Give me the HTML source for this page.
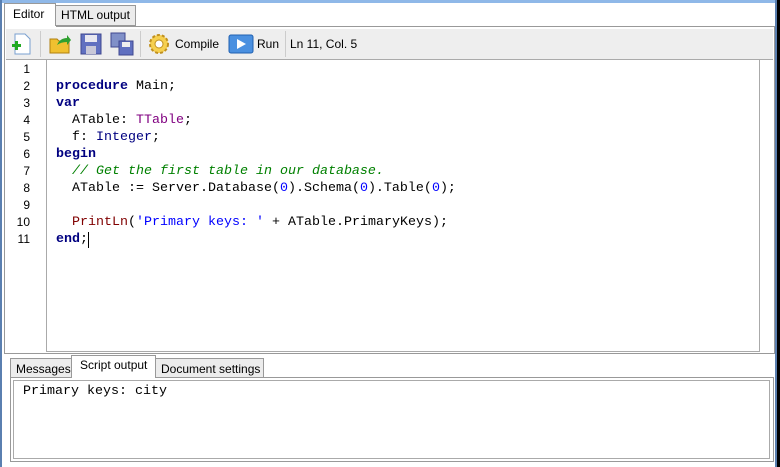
<!DOCTYPE html><html><head><style>
body{margin:0;width:780px;height:467px;overflow:hidden;background:#fff;font-family:"Liberation Sans",sans-serif;font-size:12px;position:relative}
.a{position:absolute;box-sizing:border-box}
.code{font-family:"Liberation Mono",monospace;font-size:13.33px;line-height:17px;white-space:pre}
.k{color:#000080;font-weight:bold}.t{color:#800080}.ty{color:#000080}.c{color:#008000;font-style:italic}.s{color:#0000ff}.n{color:#0000ff}.f{color:#800000}
.tb{font-size:12px;color:#000}
</style></head><body>
<div class="a" style="left:0;top:0;width:780px;height:3px;background:#8fb8e8"></div>
<div class="a" style="left:0;top:0;width:2px;height:467px;background:#5a7fb0"></div>
<div class="a" style="left:775px;top:0;width:2px;height:467px;background:#5a7fb0"></div>
<div class="a" style="left:777px;top:0;width:3px;height:467px;background:#000"></div>
<!-- top tabs -->
<div class="a" style="left:55px;top:5px;width:81px;height:21px;background:#ececec;border:1px solid #999;padding:2px 0 0 5px;font-size:12px">HTML output</div>
<div class="a" style="left:4px;top:3px;width:52px;height:24px;background:#fff;border:1px solid #999;border-bottom:none;padding:3px 0 0 8px;font-size:12px">Editor</div>
<div class="a" style="left:4px;top:26px;width:771px;height:1px;background:#999"></div>
<div class="a" style="left:4px;top:26px;width:52px;height:1px;background:#fff"></div>
<!-- main frame -->
<div class="a" style="left:4px;top:26px;width:771px;height:328px;border:1px solid #999;border-top:none"></div>
<div class="a" style="left:6px;top:29px;width:767px;height:31px;background:#eeeeee;border-bottom:1px solid #aaa"></div>
<div class="a" style="left:40px;top:31px;width:1px;height:26px;background:#ccc"></div>
<div class="a" style="left:140px;top:31px;width:1px;height:26px;background:#ccc"></div>
<div class="a" style="left:285px;top:31px;width:1px;height:26px;background:#ccc"></div>
<!-- icons -->
<svg class="a" style="left:10px;top:32px" width="24" height="24"><path d="M5 2h10l5 5v15H5z" fill="#fff" stroke="#7aa0d0"/><rect x="2" y="12" width="9" height="3" fill="#2a2"/><rect x="5" y="9" width="3" height="9" fill="#2a2"/></svg>
<svg class="a" style="left:48px;top:32px" width="24" height="24"><path d="M2 7h7l2 2h10v12H2z" fill="#f0c030" stroke="#b08010"/><path d="M9 13q3-7 10-7v-3l4 5-4 5v-3q-6 0-10 3z" fill="#30a030"/></svg>
<svg class="a" style="left:80px;top:33px" width="22" height="22"><rect x="1" y="1" width="20" height="20" fill="#6070c0" stroke="#404890"/><rect x="5" y="2" width="12" height="7" fill="#e8e8f0"/><rect x="6" y="13" width="10" height="8" fill="#c8c8d8"/></svg>
<svg class="a" style="left:110px;top:32px" width="24" height="24"><rect x="1" y="1" width="14" height="14" fill="#8090c8" stroke="#404890"/><rect x="9" y="9" width="14" height="14" fill="#6070c0" stroke="#404890"/><rect x="12" y="10" width="8" height="5" fill="#eee"/></svg>
<svg class="a" style="left:147px;top:32px" width="24" height="24"><circle cx="12" cy="12" r="9" fill="#f6d050" stroke="#c09020" stroke-width="2" stroke-dasharray="3 2"/><circle cx="12" cy="12" r="4" fill="#fff" stroke="#c09020"/></svg>
<div class="a tb" style="left:175px;top:37px">Compile</div>
<svg class="a" style="left:228px;top:34px" width="26" height="20"><rect x="1" y="1" width="24" height="18" rx="2" fill="#4a90e0" stroke="#2060b0"/><path d="M9 5l9 5-9 5z" fill="#fff"/></svg>
<div class="a tb" style="left:257px;top:37px">Run</div>
<div class="a tb" style="left:290px;top:37px">Ln 11, Col. 5</div>
<!-- editor -->
<div class="a" style="left:6px;top:60px;width:40px;height:292px;background:#fff"></div>
<div class="a" style="left:46px;top:60px;width:714px;height:292px;border:1px solid #aaa;border-top:none"></div>
<div class="a code" style="left:6px;top:61px;width:24px;text-align:right;font-family:'Liberation Sans',sans-serif;font-size:12px">1
2
3
4
5
6
7
8
9
10
11</div>
<div class="a code" style="left:56px;top:61px">
<span class="k">procedure</span> Main;
<span class="k">var</span>
  ATable: <span class="t">TTable</span>;
  f: <span class="ty">Integer</span>;
<span class="k">begin</span>
  <span class="c">// Get the first table in our database.</span>
  ATable := Server.Database(<span class="n">0</span>).Schema(<span class="n">0</span>).Table(<span class="n">0</span>);

  <span class="f">PrintLn</span>(<span class="s">'Primary keys: '</span> + ATable.PrimaryKeys);
<span class="k">end</span>;</div>
<div class="a" style="left:88px;top:232px;width:1px;height:16px;background:#000"></div>
<!-- bottom tabs -->
<div class="a" style="left:10px;top:358px;width:62px;height:20px;background:#ececec;border:1px solid #999;padding:3px 0 0 5px">Messages</div>
<div class="a" style="left:155px;top:358px;width:109px;height:20px;background:#ececec;border:1px solid #999;padding:3px 0 0 5px">Document settings</div>
<div class="a" style="left:71px;top:355px;width:85px;height:23px;background:#fff;border:1px solid #999;border-bottom:none;padding:2px 0 0 8px">Script output</div>
<div class="a" style="left:10px;top:377px;width:764px;height:85px;border:1px solid #999"></div>
<div class="a" style="left:72px;top:377px;width:83px;height:1px;background:#fff"></div>
<div class="a" style="left:13px;top:380px;width:757px;height:79px;border:1px solid #aaa"></div>
<div class="a code" style="left:23px;top:383px">Primary keys: city</div>
</body></html>
